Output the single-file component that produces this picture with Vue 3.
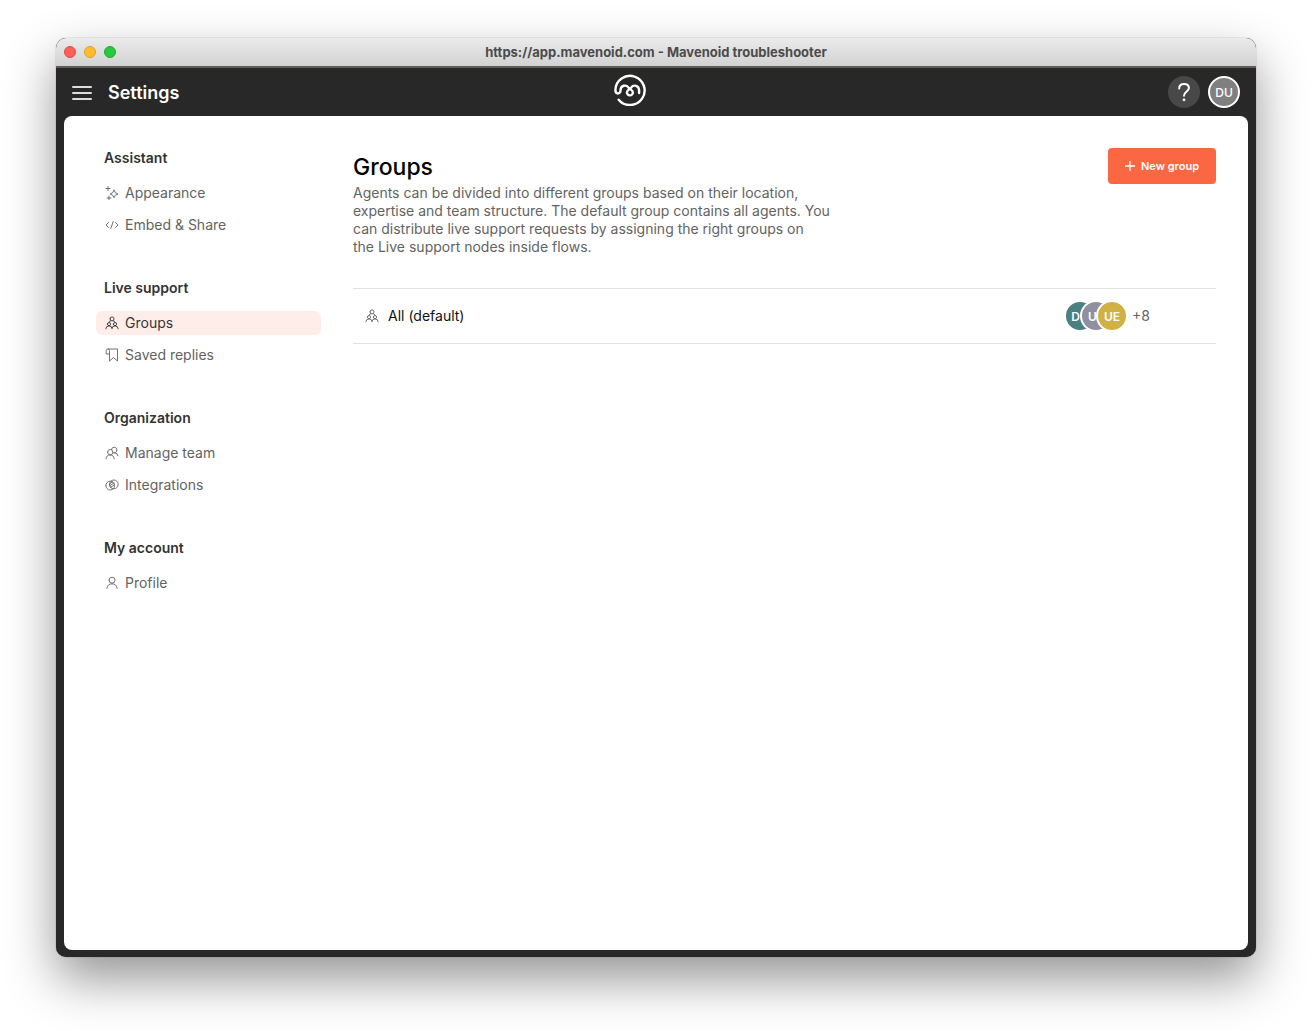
<script setup>
const sections = [
  { title: 'Assistant', items: [{ label: 'Appearance', icon: 'sparkles' }, { label: 'Embed & Share', icon: 'code' }] },
  { title: 'Live support', items: [{ label: 'Groups', icon: 'group', active: true }, { label: 'Saved replies', icon: 'bookmark' }] },
  { title: 'Organization', items: [{ label: 'Manage team', icon: 'team' }, { label: 'Integrations', icon: 'rings' }] },
  { title: 'My account', items: [{ label: 'Profile', icon: 'person' }] },
]

const icons = {
  sparkles: 'M9 4.2Q9.6 7.4 13 8Q9.6 8.6 9 11.8Q8.4 8.6 5 8Q8.4 7.4 9 4.2ZM3 .5V4.5M1 2.5H5M4 10V14M2 12H6',
  code: 'M3.5 4.5L1 7L3.5 9.5M10.5 4.5L13 7L10.5 9.5M8.2 3.5L5.8 10.5',
  group: 'M5 2.9a2 2 0 1 0 4 0a2 2 0 1 0-4 0M2.4 8.1a1.6 1.6 0 1 0 3.2 0a1.6 1.6 0 1 0-3.2 0M8.4 8.1a1.6 1.6 0 1 0 3.2 0a1.6 1.6 0 1 0-3.2 0M.8 12.8Q1 9.9 4 9.9Q7 9.9 7 12.8Q7 9.9 10 9.9Q13 9.9 13.2 12.8M3.9 6.3Q4.2 5 5.8 4.7M10.1 6.3Q9.8 5 8.2 4.7',
  bookmark: 'M3.5 1H12.5V13L8.5 9.5L4.5 13V2.5Q4.5 1 3 1Q1.2 1 1.2 2.8V6H4.5',
  team: 'M2.5 6.2a2.7 2.7 0 1 0 5.4 0a2.7 2.7 0 1 0-5.4 0M1 12.8Q1.3 9 5.2 9Q8.8 9 9.2 12.8M6.4 3.6A2.8 2.8 0 1 1 9.6 6.8Q12.8 7.2 13 9.8M8 6.8H9.6',
  rings: 'M.8 7.6a4.4 4.4 0 1 0 8.8 0a4.4 4.4 0 1 0-8.8 0M4.4 6.4a4.4 4.4 0 1 0 8.8 0a4.4 4.4 0 1 0-8.8 0M5 5.6L7.5 4M4.6 7.8L9 5M5.4 9.4L9.5 6.8',
  person: 'M4 4.2a3 3 0 1 0 6 0a3 3 0 1 0-6 0M1.8 12.5Q2.5 7.8 7 7.8Q11.5 7.8 12.2 12.5',
}

const agents = [
  { initials: 'DU', color: '#4a8083' },
  { initials: 'UE', color: '#908f9f' },
  { initials: 'UE', color: '#d0b144' },
]
</script>

<template>
  <div class="desktop">
    <div class="window">
      <div class="titlebar">
        <div class="lights">
          <span class="light close"></span>
          <span class="light minimize"></span>
          <span class="light expand"></span>
        </div>
        <span class="address">https://app.mavenoid.com - Mavenoid troubleshooter</span>
      </div>

      <header class="topbar">
        <div class="topbar-left">
          <button class="menu" type="button" aria-label="Menu"><i></i><i></i><i></i></button>
          <span class="page-name">Settings</span>
        </div>
        <svg class="logo" viewBox="0 0 32 32" aria-hidden="true">
          <path d="M4.7 25.7A14.6 14.6 0 1 0 1.4 16C1.4 20.6 6.5 20.4 6.5 16.5C6.5 10.8 12.3 10.6 14.3 13.4C15.8 15.5 18.9 16 18.9 18.4A3 3 0 1 1 12.9 18.4C12.9 16 15.6 15.4 17.2 13.4C19.4 10.6 25.1 11 25.1 16.5V19" />
        </svg>
        <div class="topbar-right">
          <button class="help" type="button" aria-label="Help">
            <svg viewBox="0 0 32 32"><path d="M11.2 12.5C11.2 9.3 13.2 8 16 8C18.8 8 20.9 9.5 20.9 12C20.9 15.5 16 15.5 16 19.8" /><circle cx="16" cy="23.8" r="1.4" /></svg>
          </button>
          <button class="account" type="button">DU</button>
        </div>
      </header>

      <div class="panel">
        <nav class="sidebar">
          <section v-for="section in sections" :key="section.title">
            <h2>{{ section.title }}</h2>
            <ul>
              <li v-for="item in section.items" :key="item.label">
                <a href="#" :class="{ active: item.active }">
                  <svg class="icon" viewBox="0 0 14 14"><path :d="icons[item.icon]" /></svg>
                  {{ item.label }}
                </a>
              </li>
            </ul>
          </section>
        </nav>

        <main>
          <div class="intro">
            <div class="intro-text">
              <h1>Groups</h1>
              <p>Agents can be divided into different groups based on their location, expertise and team structure. The default group contains all agents. You can distribute live support requests by assigning the right groups on the&nbsp;Live support nodes inside flows.</p>
            </div>
            <button class="new-group" type="button">
              <svg viewBox="0 0 10 10"><path d="M5 0V10M0 5H10" /></svg>
              New group
            </button>
          </div>
          <ul class="groups">
            <li>
              <svg class="icon" viewBox="0 0 14 14"><path :d="icons.group" /></svg>
              <span class="group-name">All (default)</span>
              <span class="agents">
                <span v-for="agent in agents" :key="agent.color" class="agent" :style="{ background: agent.color }">{{ agent.initials }}</span>
              </span>
              <span class="more">+8</span>
            </li>
          </ul>
        </main>
      </div>
    </div>
  </div>
</template>

<style>
body {
  margin: 0;
  background: #fff;
}
</style>

<style scoped>
* {
  box-sizing: border-box;
}
.desktop {
  display: flex;
  min-height: 100vh;
  padding: 38px 56px 74px;
  overflow: hidden;
  font-family: Inter, "Liberation Sans", sans-serif;
  font-size: 14px;
  line-height: 18px;
  color: #636363;
}
.window {
  flex: 1;
  display: flex;
  flex-direction: column;
  border-radius: 10px;
  background: #282828;
  box-shadow: 0 0 1px rgba(0, 0, 0, 0.6), 0 22px 50px rgba(0, 0, 0, 0.42);
}
.titlebar {
  display: grid;
  grid-template-columns: 1fr auto 1fr;
  align-items: center;
  height: 30px;
  padding: 0 8px;
  border-radius: 10px 10px 0 0;
  border-bottom: 2px solid #635b5a;
  background: linear-gradient(#ebebeb, #d2d2d2);
}
.lights {
  display: flex;
  gap: 8px;
}
.light {
  width: 12px;
  height: 12px;
  border-radius: 50%;
}
.close {
  background: #ff5f57;
  border: 1px solid #e2463f;
}
.minimize {
  background: #febc2e;
  border: 1px solid #dfa023;
}
.expand {
  background: #28c840;
  border: 1px solid #1dad2b;
}
.address {
  font-size: 13px;
  font-weight: 700;
  color: #4b4b4b;
}
.topbar {
  display: grid;
  grid-template-columns: 1fr auto 1fr;
  align-items: center;
  height: 48px;
  padding: 0 16px;
  color: #fff;
}
.topbar-left {
  display: flex;
  align-items: center;
  gap: 16px;
  padding-top: 2px;
}
button {
  padding: 0;
  border: 0;
  font: inherit;
  cursor: pointer;
}
.menu {
  display: flex;
  flex-direction: column;
  gap: 4px;
  width: 20px;
  background: none;
}
.menu i {
  height: 2px;
  border-radius: 1px;
  background: #dedede;
}
.page-name {
  font-size: 18px;
  line-height: 24px;
  font-weight: 600;
}
.logo {
  width: 32px;
  height: 32px;
  margin: 0 52px 4px 0;
  fill: none;
  stroke: #fff;
  stroke-width: 2.4;
  stroke-linecap: round;
}
.topbar-right {
  display: flex;
  justify-content: flex-end;
  gap: 8px;
}
.help,
.account {
  width: 32px;
  height: 32px;
  border-radius: 50%;
  color: #fff;
}
.help {
  background: #484848;
}
.help svg {
  display: block;
  fill: none;
  stroke: #fff;
  stroke-width: 2;
  stroke-linecap: round;
}
.help circle {
  fill: #fff;
  stroke: none;
}
.account {
  padding-top: 1px;
  border: 2px solid #fff;
  background: #808080;
  font-size: 12px;
  font-weight: 500;
}
.panel {
  flex: 1;
  display: flex;
  gap: 32px;
  margin: 0 8px 7px;
  padding: 32px;
  border-radius: 8px;
  background: #fff;
}
.sidebar {
  display: flex;
  flex-direction: column;
  gap: 42px;
  width: 225px;
  padding-top: 1px;
}
h1,
h2,
p,
ul {
  margin: 0;
  padding: 0;
  list-style: none;
}
h2 {
  margin-bottom: 14px;
  padding: 0 8px;
  font-size: 14px;
  line-height: 18px;
  font-weight: 600;
  color: #333;
}
.sidebar ul {
  display: flex;
  flex-direction: column;
  gap: 8px;
}
.sidebar a {
  display: flex;
  align-items: center;
  gap: 6px;
  height: 24px;
  padding: 0 9px;
  border-radius: 6px;
  color: inherit;
  text-decoration: none;
}
.sidebar .active {
  background: #ffedea;
  color: #363636;
}
.icon {
  width: 14px;
  height: 14px;
  fill: none;
  stroke: currentColor;
  stroke-width: 0.9;
  stroke-linecap: round;
  stroke-linejoin: round;
}
main {
  flex: 1;
  min-width: 0;
}
.intro {
  display: flex;
  justify-content: space-between;
  align-items: flex-start;
  padding-bottom: 32px;
}
.intro-text {
  max-width: 488px;
}
h1 {
  padding: 3px 0 1px;
  font-size: 23px;
  line-height: 32px;
  font-weight: 500;
  color: #000;
}
.new-group {
  display: flex;
  align-items: center;
  justify-content: center;
  gap: 6px;
  width: 108px;
  height: 36px;
  border-radius: 4px;
  background: #fc6743;
  color: #fff;
  font-size: 11px;
  font-weight: 600;
}
.new-group svg {
  width: 10px;
  height: 10px;
  stroke: #fff;
  stroke-width: 1.3;
}
.groups {
  border-top: 1px solid #e2e2e2;
}
.groups li {
  display: flex;
  align-items: center;
  height: 55px;
  padding: 0 66px 0 12px;
  border-bottom: 1px solid #e2e2e2;
}
.group-name {
  flex: 1;
  padding-left: 9px;
  color: #111;
}
.agents {
  display: flex;
}
.agent {
  width: 32px;
  height: 32px;
  margin-left: -16px;
  border: 2px solid #fff;
  border-radius: 50%;
  font-size: 12px;
  line-height: 30px;
  font-weight: 600;
  text-align: center;
  color: #fff;
}
.more {
  padding-left: 4px;
}
</style>
